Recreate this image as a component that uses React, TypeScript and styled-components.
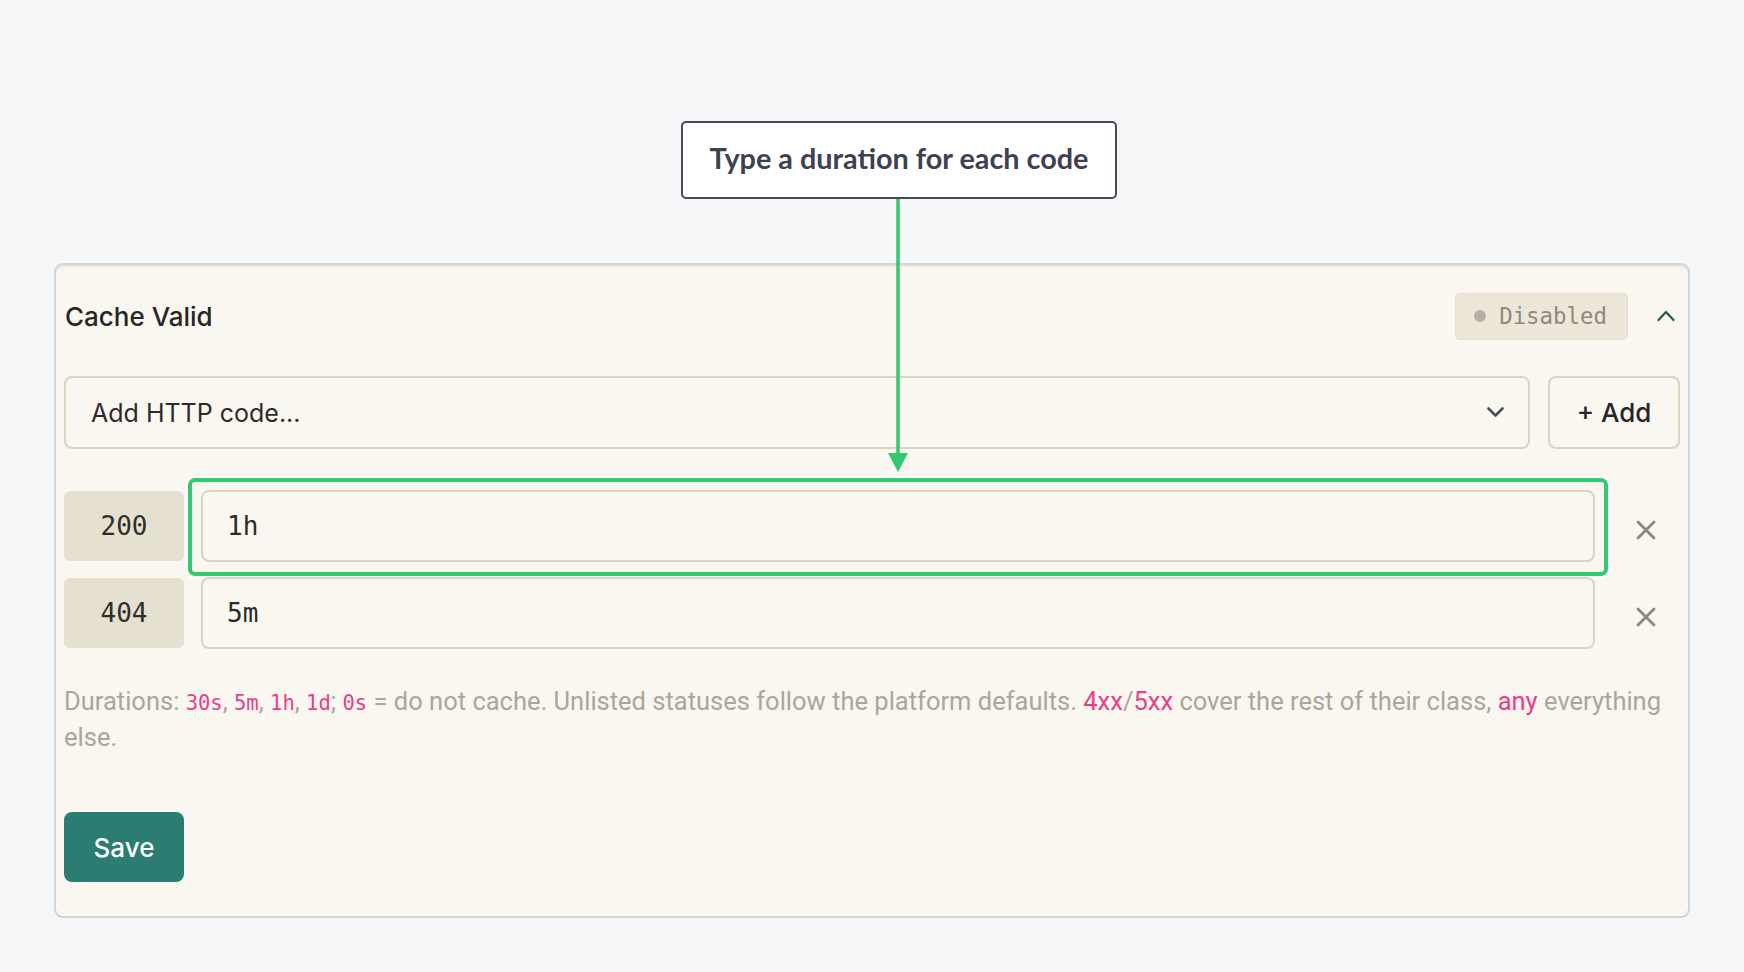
import React from "react";
import styled, { createGlobalStyle } from "styled-components";

const GlobalStyle = createGlobalStyle`
  html, body { margin: 0; padding: 0; background: #f5f6f8; }
  body {
    font-family: Inter, "Noto Sans", sans-serif;
    -webkit-font-smoothing: antialiased;
  }
  * { box-sizing: border-box; }
`;

const Page = styled.div`
  position: relative;
  min-height: 972px;
  padding: 263px 54px 55px 54px;
`;

const Card = styled.section`
  background: #faf7f0;
  border: 2px solid #d0d5de;
  border-radius: 9px;
  box-shadow: inset 0 2px 0 #efe8d6;
  padding: 0 8px 34px;
`;

const Header = styled.header`
  display: flex;
  align-items: center;
  height: 102px;
  padding-left: 1px;
`;

const Title = styled.h2`
  margin: 0;
  flex: 1;
  font-size: 26px;
  font-weight: 500;
  color: #262626;
`;

const StatusBadge = styled.span`
  display: inline-flex;
  align-items: center;
  gap: 13px;
  height: 47px;
  padding: 0 20px 0 18px;
  background: #ede7da;
  border: 1px solid #e5dece;
  border-radius: 5px;
  font-family: "DejaVu Sans Mono", monospace;
  font-size: 22.4px;
  color: #8d897e;
`;

const Dot = styled.span`
  width: 12px;
  height: 12px;
  border-radius: 50%;
  background: #b3afa5;
`;

const IconButton = styled.button`
  display: flex;
  align-items: center;
  justify-content: center;
  width: 28px;
  height: 28px;
  margin-left: 24px;
  padding: 0;
  border: 0;
  background: transparent;
  cursor: pointer;
`;

const AddRow = styled.div`
  display: flex;
  gap: 18px;
  height: 73px;
  margin-top: 9px;
`;

const Select = styled.div`
  flex: 1;
  display: flex;
  align-items: center;
  justify-content: space-between;
  padding: 0 24px 0 25px;
  border: 2px solid #dcd4c1;
  border-radius: 8px;
  font-size: 25px;
  color: #2b2b2b;
`;

const OutlineButton = styled.button`
  width: 132px;
  border: 2px solid #dcd4c1;
  border-radius: 8px;
  background: transparent;
  font-family: inherit;
  font-size: 26px;
  font-weight: 500;
  color: #262626;
  cursor: pointer;
`;

const Rows = styled.div`
  display: flex;
  flex-direction: column;
  gap: 15px;
  margin-top: 41px;
`;

const Row = styled.div`
  display: flex;
  align-items: center;
  gap: 17px;
  height: 72px;
`;

const Code = styled.span`
  display: flex;
  align-items: center;
  justify-content: center;
  width: 120px;
  height: 70px;
  flex: none;
  background: #e6e0d1;
  border-radius: 6px;
  font-family: "DejaVu Sans Mono", monospace;
  font-size: 26px;
  color: #2e2e2e;
`;

const Field = styled.div`
  position: relative;
  flex: 1;
  height: 100%;
`;

const DurationInput = styled.input`
  width: 100%;
  height: 100%;
  padding: 0 24px;
  border: 2px solid #dcd4c1;
  border-radius: 8px;
  background: #faf7f0;
  font-family: "DejaVu Sans Mono", monospace;
  font-size: 26px;
  color: #2a2a2a;
  outline: none;
`;

const Highlight = styled.div`
  position: absolute;
  inset: -12px -13px -14px -13px;
  border: 4px solid #33c96f;
  border-radius: 7px;
  box-shadow: 0 0 0 3px #ffffff;
  pointer-events: none;
`;

const RemoveButton = styled.button`
  display: flex;
  align-items: center;
  justify-content: center;
  width: 68px;
  height: 100%;
  flex: none;
  padding: 8px 0 0;
  border: 0;
  background: transparent;
  cursor: pointer;
`;

const Hint = styled.p`
  margin: 35px 0 0;
  font-family: Roboto, "Noto Sans", sans-serif;
  font-size: 25.5px;
  line-height: 34px;
  color: #aba69a;
`;

const Token = styled.code`
  font-family: "DejaVu Sans Mono", monospace;
  font-size: 20.5px;
  color: #e83e8c;
`;

const Accent = styled.span`
  color: #e83e8c;
`;

const Words = styled.span``;

const SaveButton = styled.button`
  display: block;
  width: 120px;
  height: 70px;
  margin-top: 58px;
  border: 0;
  border-radius: 8px;
  background: #2b7d71;
  font-family: inherit;
  font-size: 26px;
  font-weight: 500;
  color: #ffffff;
  cursor: pointer;
`;

const Callout = styled.div`
  position: absolute;
  left: 681px;
  top: 121px;
  width: 436px;
  height: 78px;
  display: flex;
  align-items: center;
  justify-content: center;
  padding-bottom: 5px;
  background: #ffffff;
  border: 2px solid #474a57;
  border-radius: 5px;
  font-family: Lato, "Noto Sans", sans-serif;
  font-weight: 700;
  font-size: 28.8px;
  color: #3d4150;
`;

const Pointer = styled.svg`
  position: absolute;
  left: 886px;
  top: 199px;
`;

const ChevronDown = () => (
  <svg width="17" height="11" viewBox="0 0 17 11" fill="none">
    <path d="M1.5 1.5 L8.5 8.5 L15.5 1.5" stroke="#4a4d5a" strokeWidth="2.6" strokeLinecap="round" strokeLinejoin="round" />
  </svg>
);

const ChevronUp = () => (
  <svg width="18" height="12" viewBox="0 0 18 12" fill="none">
    <path d="M1.5 10 L9 2 L16.5 10" stroke="#22594f" strokeWidth="2.2" strokeLinecap="round" strokeLinejoin="round" />
  </svg>
);

const Cross = () => (
  <svg width="20" height="20" viewBox="0 0 20 20" fill="none">
    <path d="M2 2 L18 18 M18 2 L2 18" stroke="#8b877f" strokeWidth="2.8" strokeLinecap="round" />
  </svg>
);

const entries = [
  { code: "200", value: "1h", focused: true },
  { code: "404", value: "5m", focused: false },
];

export default function App() {
  return (
    <>
      <GlobalStyle />
      <Page>
        <Card>
          <Header>
            <Title>Cache Valid</Title>
            <StatusBadge>
              <Dot />
              Disabled
            </StatusBadge>
            <IconButton aria-label="Collapse">
              <ChevronUp />
            </IconButton>
          </Header>

          <AddRow>
            <Select>
              <span>Add HTTP code...</span>
              <ChevronDown />
            </Select>
            <OutlineButton>+ Add</OutlineButton>
          </AddRow>

          <Rows>
            {entries.map((e) => (
              <Row key={e.code}>
                <Code>{e.code}</Code>
                <Field>
                  <DurationInput defaultValue={e.value} />
                  {e.focused && <Highlight />}
                </Field>
                <RemoveButton aria-label={`Remove ${e.code}`}>
                  <Cross />
                </RemoveButton>
              </Row>
            ))}
          </Rows>

          <Hint>
            <Words>Durations:</Words> <Token>30s</Token>, <Token>5m</Token>, <Token>1h</Token>,{" "}
            <Token>1d</Token>; <Token>0s</Token>{" "}
            <Words>= do not cache. Unlisted statuses follow the platform defaults.</Words>{" "}
            <Accent>4xx</Accent>/<Accent>5xx</Accent> <Words>cover the rest of their class,</Words>{" "}
            <Accent>any</Accent> <Words>everything</Words> <Words>else.</Words>
          </Hint>

          <SaveButton>Save</SaveButton>
        </Card>

        <Callout>Type a duration for each code</Callout>
        <Pointer width="24" height="276" viewBox="0 0 24 276">
          <line x1="12" y1="0" x2="12" y2="256" stroke="#33c96f" strokeWidth="3.5" />
          <polygon points="2,254 22,254 12,273" fill="#33c96f" />
        </Pointer>
      </Page>
    </>
  );
}
